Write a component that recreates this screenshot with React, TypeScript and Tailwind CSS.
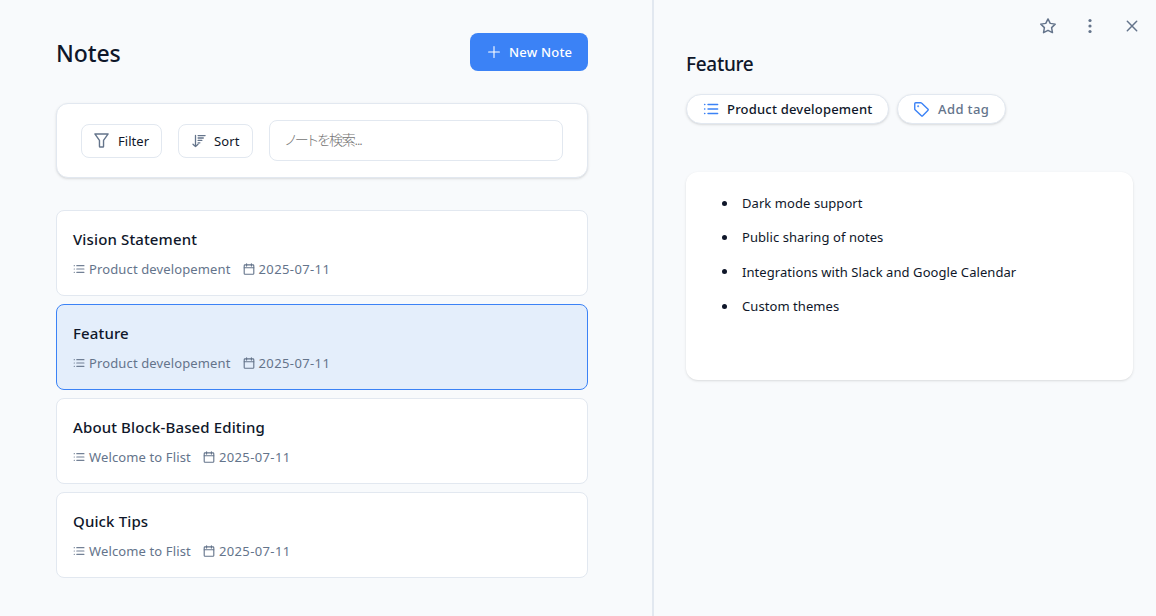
import type { ReactNode } from "react";

type IconProps = { className?: string };

function Svg({ className, children }: IconProps & { children: ReactNode }) {
  return (
    <svg
      viewBox="0 0 14 14"
      fill="none"
      stroke="currentColor"
      strokeWidth="1.3"
      strokeLinecap="round"
      strokeLinejoin="round"
      className={`shrink-0 ${className ?? ""}`}
    >
      {children}
    </svg>
  );
}

const PlusIcon = ({ className }: IconProps) => (
  <Svg className={className}>
    <path strokeWidth="1.1" d="M7 1.6v10.8M1.6 7h10.8" />
  </Svg>
);

const FilterIcon = ({ className }: IconProps) => (
  <Svg className={className}>
    <path d="M.8.9h12.4L8.9 6.8v5.7q0 .6-.6.6H5.7q-.6 0-.6-.6V6.8Z" />
  </Svg>
);

const SortIcon = ({ className }: IconProps) => (
  <Svg className={className}>
    <path d="M3.5 1.4v11.1M1 10.2l2.5 2.4L6 10.2M6.1 1.6h7M6.1 4h5.2M6.1 6.4h3.7M6.1 8.8h1.8" />
  </Svg>
);

const ListIcon = ({ className }: IconProps) => (
  <Svg className={className}>
    <path d="M4.4 3.1h8.4M4.4 7h8.4M4.4 10.9h8.4" />
    <path d="M1.4 3.1h.2M1.4 7h.2M1.4 10.9h.2" />
  </Svg>
);

const CalendarIcon = ({ className }: IconProps) => (
  <Svg className={className}>
    <rect x="1.4" y="2.2" width="11.2" height="11" rx="1" />
    <path d="M1.4 5.5h11.2M4.2.8v2.8M9.8.8v2.8" />
  </Svg>
);

const TagIcon = ({ className }: IconProps) => (
  <Svg className={className}>
    <path d="M.7 1.6q0-.9.9-.9h4.7q.4 0 .7.3l5.9 5.6q.7.7 0 1.4l-4.8 4.9q-.6.6-1.2 0L1 7.2q-.3-.3-.3-.7Z" />
    <circle cx="3.9" cy="3.9" r=".3" fill="currentColor" />
  </Svg>
);

const StarIcon = ({ className }: IconProps) => (
  <Svg className={className}>
    <path d="m7 .8 1.95 3.9 4.35.65-3.15 3.05.75 4.4L7 10.75 3.1 12.8l.75-4.4L.7 5.35l4.35-.65Z" />
  </Svg>
);

const DotsIcon = ({ className }: IconProps) => (
  <Svg className={className}>
    <g fill="currentColor" stroke="none">
      <circle cx="7" cy="2.2" r="1.4" />
      <circle cx="7" cy="7" r="1.4" />
      <circle cx="7" cy="11.8" r="1.4" />
    </g>
  </Svg>
);

const CloseIcon = ({ className }: IconProps) => (
  <Svg className={className}>
    <path d="m2.9 2.9 8.2 8.2M11.1 2.9l-8.2 8.2" />
  </Svg>
);

const notes = [
  { title: "Vision Statement", list: "Product developement", date: "2025-07-11" },
  { title: "Feature", list: "Product developement", date: "2025-07-11", active: true },
  { title: "About Block-Based Editing", list: "Welcome to Flist", date: "2025-07-11" },
  { title: "Quick Tips", list: "Welcome to Flist", date: "2025-07-11" },
];

const bullets = [
  "Dark mode support",
  "Public sharing of notes",
  "Integrations with Slack and Google Calendar",
  "Custom themes",
];

export default function App() {
  return (
    <div className="flex h-[616px] w-[1156px] overflow-hidden bg-[#f8fafc] font-['Noto_Sans','Noto_Sans_CJK_JP',sans-serif] text-[13px] text-[#0f172a]">
      <main className="w-[654px] shrink-0 border-r-2 border-[#e2e8f0] pt-[33px] pr-16 pl-14">
        <header className="flex h-[38px] items-center justify-between">
          <h1 className="mt-0.5 text-[23px] font-medium tracking-[-0.1px] whitespace-nowrap">Notes</h1>
          <button className="flex h-[38px] w-[118px] items-center rounded-lg bg-[#3b82f6] pl-[17px] font-medium tracking-[0.2px] whitespace-nowrap text-white">
            <PlusIcon className="mr-2 size-3.5" />
            <span className="pt-px">New Note</span>
          </button>
        </header>

        <section className="mt-8 flex h-[75px] items-center gap-4 rounded-xl border border-[#e2e8f0] bg-white px-6 shadow-sm">
          <button className="flex h-[34px] w-[81px] items-center gap-2 rounded-lg border border-[#e2e8f0] pl-3 tracking-[0.05px] whitespace-nowrap">
            <FilterIcon className="mr-px size-[15px] text-[#64748b]" />
            <span className="pt-0.5">Filter</span>
          </button>
          <button className="flex h-[34px] w-[75px] items-center gap-2 rounded-lg border border-[#e2e8f0] pl-[13px] tracking-[0.1px] whitespace-nowrap">
            <SortIcon className="size-3.5 text-[#64748b]" />
            <span className="pt-0.5">Sort</span>
          </button>
          <input
            placeholder="ノートを検索..."
            className="h-[41px] w-[294px] rounded-lg border border-[#e2e8f0] pr-4 pb-[3px] pl-[15px] font-['Noto_Sans_CJK_JP',sans-serif] text-sm font-light tracking-[-1.15px] [font-feature-settings:'palt'] placeholder:text-[#757575]"
          />
        </section>

        <ul className="mt-8 flex flex-col gap-2">
          {notes.map((n) => (
            <li
              key={n.title}
              className={`flex h-[86px] flex-col rounded-lg border px-4 pt-4 ${
                n.active ? "border-[#3b82f6] bg-[#e4eefb]" : "border-[#e2e8f0] bg-white"
              }`}
            >
              <h2 className="text-[15px] leading-6 font-medium tracking-[0.13px] whitespace-nowrap">{n.title}</h2>
              <div className="mt-2 flex h-5 items-center whitespace-nowrap text-[#64748b]">
                <ListIcon className="mr-1 size-3 opacity-90" />
                <span className="pt-px tracking-[0.13px]">{n.list}</span>
                <CalendarIcon className="mr-1 ml-3 size-3" />
                <span className="pt-px tracking-[0.38px]">{n.date}</span>
              </div>
            </li>
          ))}
        </ul>
      </main>

      <aside className="flex-1 pr-[22px] pl-8">
        <div className="flex h-[52px] items-center justify-end gap-[26px] text-[#64748b]">
          <StarIcon className="size-4" />
          <DotsIcon className="size-4" />
          <CloseIcon className="-mr-1.5 size-4" />
        </div>
        <h2 className="-mt-px h-[28px] text-[19px] leading-[26px] font-medium tracking-[-0.3px] whitespace-nowrap">
          Feature
        </h2>
        <div className="mt-[15px] flex gap-2">
          <span className="flex h-[30px] w-[203px] items-center rounded-full border border-[#e2e8f0] bg-white pl-4 font-medium tracking-[0.2px] whitespace-nowrap shadow-sm">
            <ListIcon className="mr-2 size-4 text-[#3b82f6]" />
            <span className="pt-px">Product developement</span>
          </span>
          <span className="flex h-[30px] w-[109px] items-center rounded-full border border-[#e2e8f0] bg-white pl-4 font-medium tracking-[0.4px] whitespace-nowrap text-[#64748b] shadow-sm">
            <TagIcon className="mr-[9px] size-[15px] text-[#3b82f6]" />
            <span className="pt-px">Add tag</span>
          </span>
        </div>
        <div className="mt-12 h-[208px] w-[447px] rounded-xl bg-white pt-5 pl-9 shadow-sm">
          <ul className="flex flex-col gap-[12.4px]">
            {bullets.map((b) => (
              <li key={b} className="flex h-[22px] items-center tracking-[0.07px] whitespace-nowrap">
                <span className="mr-[15px] size-[5px] rounded-full bg-[#0f172a]" />
                <span className="pt-px">{b}</span>
              </li>
            ))}
          </ul>
        </div>
      </aside>
    </div>
  );
}
